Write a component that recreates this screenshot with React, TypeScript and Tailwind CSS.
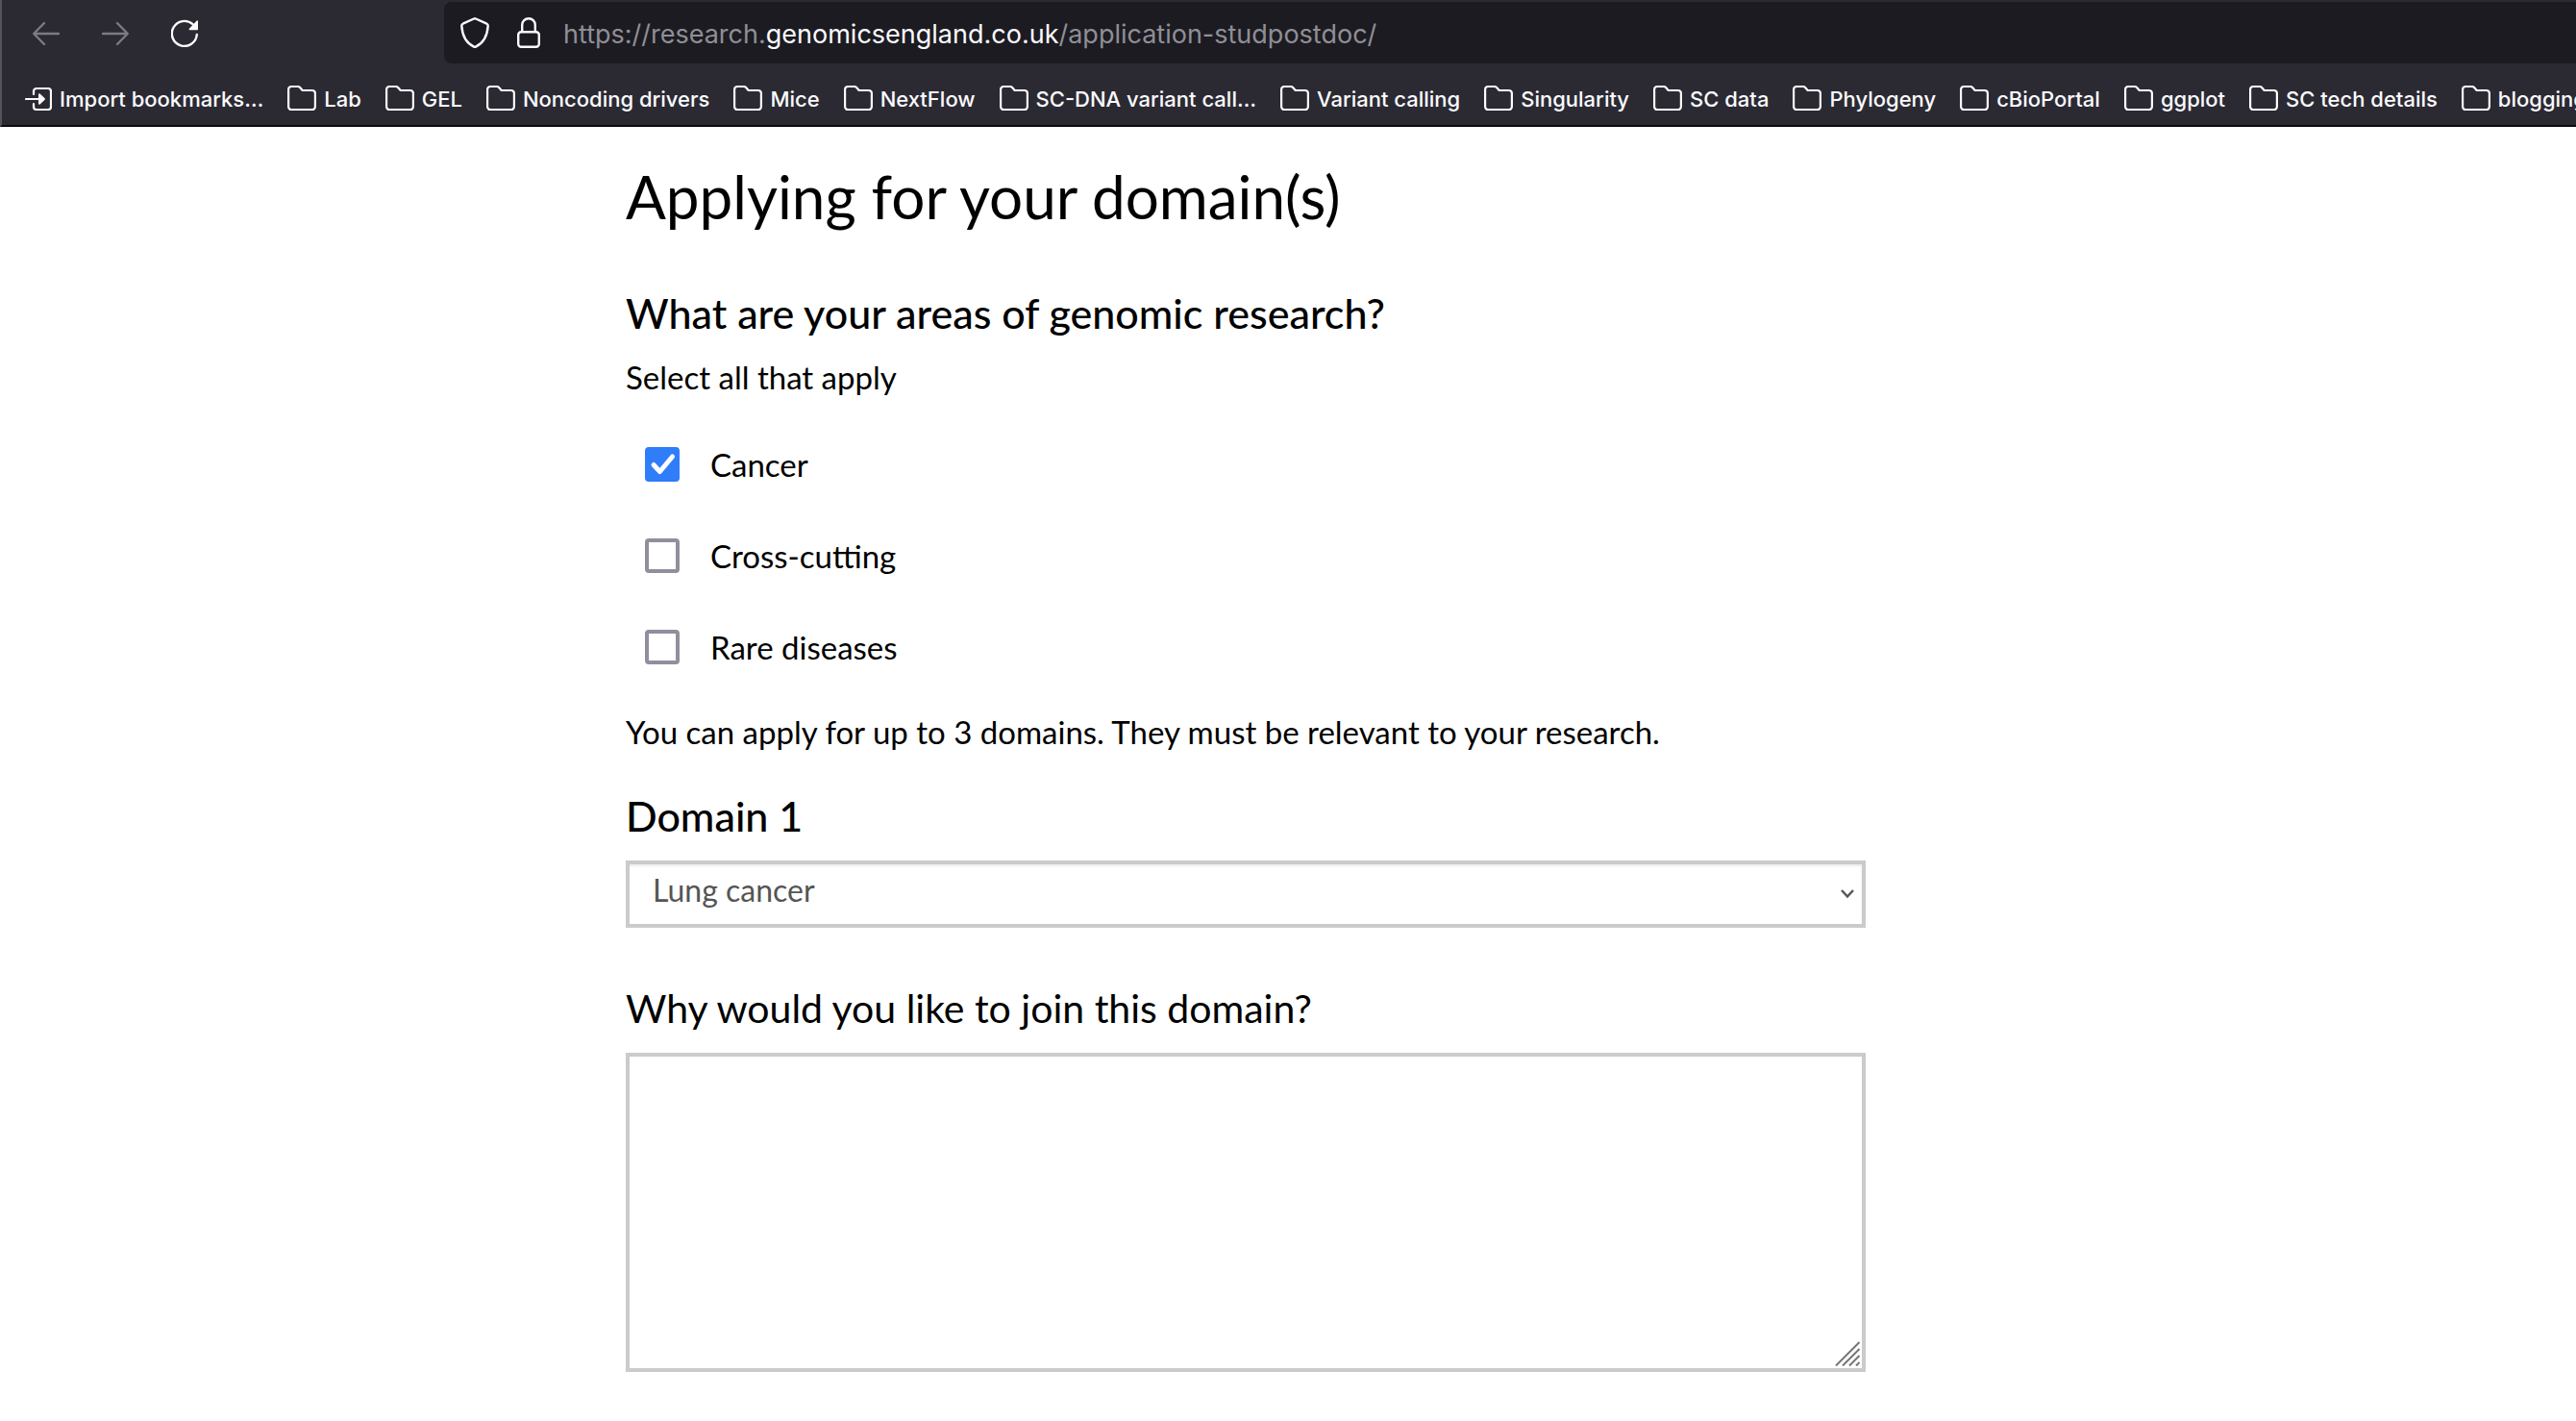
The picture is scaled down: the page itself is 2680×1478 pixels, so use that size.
import React, { useState } from "react";

const FOLDERS = [
  "Lab",
  "GEL",
  "Noncoding drivers",
  "Mice",
  "NextFlow",
  "SC-DNA variant call…",
  "Variant calling",
  "Singularity",
  "SC data",
  "Phylogeny",
  "cBioPortal",
  "ggplot",
  "SC tech details",
  "blogging",
];

const AREAS = ["Cancer", "Cross-cutting", "Rare diseases"];

const DOMAINS = ["Lung cancer", "Breast cancer", "Colorectal cancer", "Pan cancer"];

function BackIcon() {
  return (
    <svg viewBox="0 0 28 28" className="size-7" fill="none" stroke="currentColor" strokeWidth="2.4" strokeLinecap="round" strokeLinejoin="round">
      <path d="M27 15H1.500M12 4 1.200 15 12 26" />
    </svg>
  );
}

function ForwardIcon() {
  return (
    <svg viewBox="0 0 28 28" className="size-7" fill="none" stroke="currentColor" strokeWidth="2.4" strokeLinecap="round" strokeLinejoin="round">
      <path d="M1 15h25.500M16 4l10.800 11L16 26" />
    </svg>
  );
}

function ReloadIcon() {
  return (
    <svg viewBox="0 0 28 30" className="h-[30px] w-7" fill="none">
      <g transform="translate(0 2)">
        <path d="M26.800 15A13 13 0 1 1 22.500 4.200" stroke="currentColor" strokeWidth="2.400" strokeLinecap="round" />
        <path d="M28 1v8.500a.8.8 0 0 1-.8.8h-7.700c-.9 0-1.200-.9-.6-1.500L26.700.6c.5-.5 1.300-.3 1.300.4z" fill="currentColor" />
      </g>
    </svg>
  );
}

function ShieldIcon() {
  return (
    <svg viewBox="0 0 30 32" className="h-8 w-[30px]" fill="none" stroke="currentColor" strokeWidth="2.400" strokeLinejoin="round">
      <path d="M14 1.500q1-.5 2 0l11.400 5.200q1.400.7 1.300 2.200C28 19.500 23.500 27 16 30.600q-1 .4-2 0C6.500 27 2 19.500 1.300 8.900q-.1-1.500 1.300-2.200z" />
    </svg>
  );
}

function LockIcon() {
  return (
    <svg viewBox="0 0 24 32" className="h-8 w-6" fill="none" stroke="currentColor" strokeWidth="2.400">
      <rect x="1.200" y="15.200" width="21.600" height="15.600" rx="3" />
      <path d="M5.200 15V8a6.800 6.800 0 0 1 13.600 0v7" />
    </svg>
  );
}

function ImportIcon() {
  return (
    <svg viewBox="0 0 28 24" className="h-6 w-7 shrink-0" fill="none">
      <path d="M9 7V4a3 3 0 0 1 3-3h12a3 3 0 0 1 3 3v16a3 3 0 0 1-3 3H12a3 3 0 0 1-3-3v-3M1 12h14" stroke="currentColor" strokeWidth="2.200" strokeLinecap="round" />
      <path d="M14 7.200c0-1 1-1.300 1.600-.7l5 4.700q.8.8 0 1.600l-5 4.700c-.6.6-1.600.3-1.600-.7z" fill="currentColor" />
    </svg>
  );
}

function FolderIcon() {
  return (
    <svg viewBox="0 0 30 28" className="h-7 w-[30px] shrink-0" fill="none" stroke="currentColor" strokeWidth="2.200" strokeLinejoin="round">
      <path d="M1.100 22V4a3 3 0 0 1 3-3h6.800a3 3 0 0 1 2.200 1l2.600 3h10.200a3 3 0 0 1 3 3v14a3 3 0 0 1-3 3H4.100a3 3 0 0 1-3-3z" />
    </svg>
  );
}

function Toolbar() {
  return (
    <header className="overflow-hidden border-b-2 border-l-2 border-b-[#0c0c0f] border-l-[#55545b] bg-[#2b2a33] font-['Inter',sans-serif] text-[#fbfbfe]">
      <div className="flex items-center pt-0.5 pl-8">
        <nav aria-label="History" className="flex items-center gap-11">
          <button type="button" aria-label="Back" className="text-[#7c7b81]">
            <BackIcon />
          </button>
          <button type="button" aria-label="Forward" className="text-[#7c7b81]">
            <ForwardIcon />
          </button>
          <button type="button" aria-label="Reload">
            <ReloadIcon />
          </button>
        </nav>
        <div className="ml-64 flex h-16 grow items-center rounded-l-lg bg-[#1c1b22] pl-[17px]">
          <button type="button" aria-label="Tracking protection">
            <ShieldIcon />
          </button>
          <button type="button" aria-label="Site security" className="ml-[29px]">
            <LockIcon />
          </button>
          <div
            role="textbox"
            aria-label="Address"
            contentEditable
            suppressContentEditableWarning
            spellCheck={false}
            className="ml-6 grow pt-1 text-[27px] leading-9 whitespace-nowrap text-[#8f8f95] outline-none"
          >
            https://research.<span className="text-[#fbfbfe]">genomicsengland.co.uk</span>/application-studpostdoc/
          </div>
        </div>
      </div>
      <nav aria-label="Bookmarks" className="flex h-16 items-center gap-[25px] pt-2.5 pl-6 text-[22px] leading-7 font-medium whitespace-nowrap">
        <button type="button" className="flex shrink-0 items-center gap-2">
          <ImportIcon />
          Import bookmarks…
        </button>
        {FOLDERS.map((name) => (
          <button key={name} type="button" className="flex shrink-0 items-center gap-2">
            <FolderIcon />
            {name}
          </button>
        ))}
      </nav>
    </header>
  );
}

function AreaOption({ name, defaultChecked }: { name: string; defaultChecked: boolean }) {
  return (
    <label className="flex w-fit items-center gap-8 text-[33px] leading-9">
      <span className="grid size-9 *:col-start-1 *:row-start-1">
        <input
          type="checkbox"
          defaultChecked={defaultChecked}
          className="peer size-9 appearance-none rounded border-4 border-[#8f8f9d] bg-white checked:border-[#2f7df8] checked:bg-[#2f7df8]"
        />
        <svg viewBox="0 0 36 36" className="pointer-events-none invisible size-9 peer-checked:visible" fill="none" stroke="white" strokeWidth="5" strokeLinecap="round" strokeLinejoin="round">
          <path d="M9 18.500l6.500 7L28.500 10" />
        </svg>
      </span>
      {name}
    </label>
  );
}

export default function App() {
  const [domain, setDomain] = useState(DOMAINS[0]);
  return (
    <div className="min-h-screen bg-white font-['Lato',sans-serif] text-black">
      <Toolbar />
      <main className="grid grid-cols-[651fr_1290fr_739fr] pt-[34px] pb-11">
        <form className="col-start-2 flex flex-col">
          <h1 className="text-[62px] leading-[76px]">Applying for your domain(s)</h1>
          <fieldset className="mt-[58px] flex flex-col">
            <legend className="contents">
              <span className="text-[43px] leading-[52px] font-medium">What are your areas of genomic research?</span>
            </legend>
            <p className="mt-5 text-[33px] leading-10">Select all that apply</p>
            <div className="mt-[53px] flex flex-col gap-[59px] pl-5">
              {AREAS.map((name, i) => (
                <AreaOption key={name} name={name} defaultChecked={i === 0} />
              ))}
            </div>
          </fieldset>
          <p className="mt-[50px] text-[33px] leading-10">
            You can apply for up to 3 domains. They must be relevant to your research.
          </p>
          <h2 className="mt-[42px] text-[43px] leading-[52px] font-medium">
            <label htmlFor="domain">Domain 1</label>
          </h2>
          <div className="mt-5 grid *:col-start-1 *:row-start-1">
            <select
              id="domain"
              value={domain}
              onChange={(e) => setDomain(e.target.value)}
              className="h-[70px] w-full appearance-none rounded-none border-4 border-[#cbcbcb] bg-white pr-12 pb-2 pl-6 text-[32px] text-[#555555] shadow-[inset_0_2px_2px_rgba(0,0,0,0.08)]"
            >
              {DOMAINS.map((d) => (
                <option key={d}>{d}</option>
              ))}
            </select>
            <svg viewBox="0 0 14 10" className="pointer-events-none mr-3 h-2.5 w-3.5 self-center justify-self-end" fill="none" stroke="#555555" strokeWidth="2.500">
              <path d="M1 1l6 6.500L13 1" />
            </svg>
          </div>
          <label htmlFor="reason" className="mt-[58px] text-[41px] leading-[52px]">
            Why would you like to join this domain?
          </label>
          <div className="mt-5 grid *:col-start-1 *:row-start-1">
            <textarea
              id="reason"
              className="h-[332px] w-full resize-none rounded-none border-4 border-[#cbcbcb] bg-white px-6 py-3 text-[32px] text-[#555555]"
            />
            <svg viewBox="0 0 26 26" className="pointer-events-none mr-1.5 mb-1.5 size-[26px] self-end justify-self-end" fill="none" stroke="#757575" strokeWidth="2">
              <path d="M1 25.500 25.500 1M8 25.500 25.500 8M15 25.500 25.500 15M22 25.500l3.500-3.500" />
            </svg>
          </div>
        </form>
      </main>
    </div>
  );
}
